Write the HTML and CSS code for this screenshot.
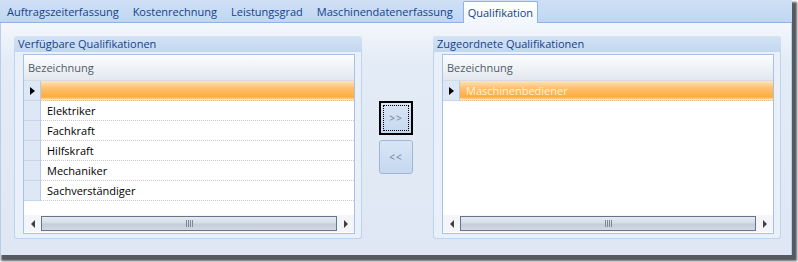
FILE: index.html
```html
<!DOCTYPE html>
<html lang="de">
<head>
  <meta charset="UTF-8">
  <title>Qualifikation</title>
  <link rel="stylesheet" href="styles.css">
</head>
<body>
  <div class="fenster">
    <div class="reiter">
      <div class="reiter-tab">Auftragszeiterfassung</div>
      <div class="reiter-tab">Kostenrechnung</div>
      <div class="reiter-tab">Leistungsgrad</div>
      <div class="reiter-tab">Maschinendatenerfassung</div>
      <div class="reiter-tab aktiv">Qualifikation</div>
    </div>

    <div class="inhalt">
      <div class="gruppe">
        <div class="gruppe-titel">Verfügbare Qualifikationen</div>
        <div class="gruppe-rumpf">
          <div class="tabelle">
            <div class="kopf">Bezeichnung</div>
            <div class="zeilen">
              <div class="zeile gewaehlt"><span class="marker"><i class="pfeil"></i></span><span class="zelle"></span></div>
              <div class="zeile"><span class="marker"></span><span class="zelle">Elektriker</span></div>
              <div class="zeile"><span class="marker"></span><span class="zelle">Fachkraft</span></div>
              <div class="zeile"><span class="marker"></span><span class="zelle">Hilfskraft</span></div>
              <div class="zeile"><span class="marker"></span><span class="zelle">Mechaniker</span></div>
              <div class="zeile"><span class="marker"></span><span class="zelle">Sachverständiger</span></div>
            </div>
            <div class="scroll">
              <span class="scroll-pfeil links"></span>
              <span class="scroll-daumen"><i class="griff"></i></span>
              <span class="scroll-pfeil rechts"></span>
            </div>
          </div>
        </div>
      </div>

      <div class="knoepfe">
        <button class="knopf fokus"><span>&gt;&gt;</span></button>
        <button class="knopf"><span>&lt;&lt;</span></button>
      </div>

      <div class="gruppe">
        <div class="gruppe-titel">Zugeordnete Qualifikationen</div>
        <div class="gruppe-rumpf">
          <div class="tabelle">
            <div class="kopf">Bezeichnung</div>
            <div class="zeilen">
              <div class="zeile gewaehlt"><span class="marker"><i class="pfeil"></i></span><span class="zelle">Maschinenbediener</span></div>
            </div>
            <div class="scroll">
              <span class="scroll-pfeil links"></span>
              <span class="scroll-daumen"><i class="griff"></i></span>
              <span class="scroll-pfeil rechts"></span>
            </div>
          </div>
        </div>
      </div>
    </div>
  </div>
</body>
</html>
```

FILE: styles.css
```css
body {
  margin: 0;
  width: 798px;
  height: 262px;
  background: #ffffff;
  font-family: 'Open Sans', 'Noto Sans', sans-serif;
  font-size: 11px;
  overflow: hidden;
}
.fenster {
  width: 792px;
  height: 255px;
  display: flex;
  flex-direction: column;
  box-shadow: 3px 4px 2px 2px #555a60;
}
.reiter {
  height: 22px;
  display: flex;
  align-items: flex-end;
  background: linear-gradient(#cfe0f5, #bfd6f3);
  border-bottom: 1px solid #8db2e3;
}
.reiter-tab {
  padding: 0 7px;
  height: 21px;
  line-height: 21px;
  color: #15428b;
  white-space: nowrap;
}
.reiter-tab.aktiv {
  margin-left: 3px;
  padding: 0 4px;
  margin-bottom: -1px;
  background: linear-gradient(#ffffff, #f2f6fb);
  border: 1px solid #8db2e3;
  border-bottom: none;
  border-radius: 2px 2px 0 0;
}
.inhalt {
  flex: 1;
  display: flex;
  padding: 13px 10px 16px 13px;
  background: linear-gradient(#f4f7fc, #e3ebf6 40px, #dfe7f4);
  border-left: 1px solid #b9cde9;
  border-right: 1px solid #b9cde9;
}
.gruppe {
  width: 348px;
  display: flex;
  flex-direction: column;
}
.gruppe-titel {
  height: 16px;
  line-height: 16px;
  padding-left: 4px;
  color: #15428b;
  background: linear-gradient(#d4e3f5, #c2d7f0);
  border-radius: 3px 3px 0 0;
  white-space: nowrap;
}
.gruppe-rumpf {
  flex: 1;
  padding: 2px 6px 4px 8px;
  background: #e9f0fa;
  border: 1px solid #c0d3ec;
  border-top: none;
  border-radius: 0 0 3px 3px;
  display: flex;
}
.tabelle {
  flex: 1;
  display: flex;
  flex-direction: column;
  background: #ffffff;
  border: 1px solid #a9c1e2;
}
.kopf {
  height: 25px;
  line-height: 25px;
  padding-left: 4px;
  color: #505a68;
  background: linear-gradient(#fbfcfd, #f0f3f7 50%, #e3e8ee);
  border-bottom: 1px solid #d5dbe3;
}
.zeilen {
  flex: 1;
  display: flex;
  flex-direction: column;
}
.zeile {
  height: 20px;
  display: flex;
}
.marker {
  width: 17px;
  background: #dde7f5;
  border-right: 1px solid #b9cbe4;
  border-bottom: 1px solid #c7d5e8;
  display: flex;
  align-items: center;
  justify-content: center;
  box-sizing: border-box;
}
.pfeil {
  width: 0;
  height: 0;
  border-top: 4px solid transparent;
  border-bottom: 4px solid transparent;
  border-left: 5px solid #000000;
  margin-left: 1px;
}
.zelle {
  flex: 1;
  padding-left: 6px;
  line-height: 19px;
  color: #000000;
  border-bottom: 1px dotted #c8c8c8;
}
.gewaehlt .zelle {
  background: linear-gradient(#fde4c0, #ffc270 35%, #ffac3e 85%, #fff2dc);
  color: #fff3d6;
  border-bottom: 1px dotted #e8c080;
}
.scroll {
  height: 17px;
  margin-bottom: 1px;
  display: flex;
  align-items: center;
  background: #f3f5f8;
}
.scroll-pfeil {
  width: 17px;
  display: flex;
  justify-content: center;
}
.scroll-pfeil::before {
  content: "";
  border-top: 4px solid transparent;
  border-bottom: 4px solid transparent;
}
.scroll-pfeil.links::before {
  border-right: 4px solid #404040;
}
.scroll-pfeil.rechts::before {
  border-left: 4px solid #404040;
}
.scroll-daumen {
  flex: 1;
  height: 15px;
  display: flex;
  align-items: center;
  justify-content: center;
  border: 1px solid #66758a;
  box-sizing: border-box;
  background: linear-gradient(#e6eaf0, #d6dde6 45%, #c3ccd8 55%, #d2d9e2);
}
.griff {
  width: 7px;
  height: 7px;
  background: repeating-linear-gradient(90deg, #7c8798 0 1px, transparent 1px 2px);
}
.knoepfe {
  width: 71px;
  display: flex;
  flex-direction: column;
  align-items: flex-start;
  gap: 5px;
  padding-top: 65px;
  padding-left: 17px;
  box-sizing: border-box;
}
.knopf {
  width: 34px;
  height: 34px;
  padding: 2px;
  font-family: 'Open Sans', 'Noto Sans', sans-serif;
  font-size: 10px;
  color: #6f7f96;
  background: linear-gradient(#d8e5f5, #c6d8ef);
  border: 1px solid #9fb6d6;
  border-radius: 3px;
}
.knopf span {
  display: flex;
  align-items: center;
  justify-content: center;
  height: 100%;
  letter-spacing: 1px;
}
.knopf.fokus {
  border: 2px solid #000000;
  border-radius: 0;
}
.knopf.fokus span {
  border: 1px dotted #000000;
  box-sizing: border-box;
}
```
